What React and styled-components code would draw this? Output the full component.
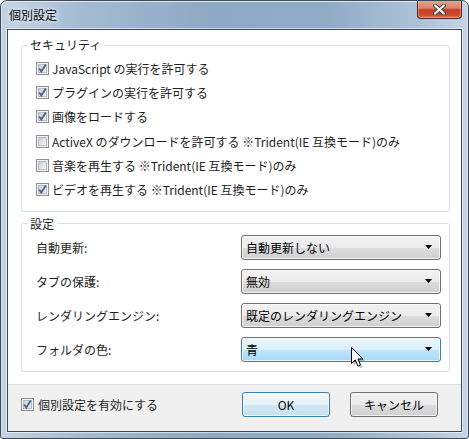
import React from 'react';
import styled, { createGlobalStyle } from 'styled-components';

const GlobalStyle = createGlobalStyle`
  html, body {
    margin: 0;
    padding: 0;
    background: #ffffff;
  }
  body {
    font-family: "Noto Sans CJK JP", "Noto Sans", sans-serif;
    font-size: 12px;
    color: #1e1e1e;
  }
`;

const securityItems = [
  { label: 'JavaScript の実行を許可する', checked: true },
  { label: 'プラグインの実行を許可する', checked: true },
  { label: '画像をロードする', checked: true },
  { label: 'ActiveX のダウンロードを許可する ※Trident(IE 互換モード)のみ', checked: false },
  { label: '音楽を再生する ※Trident(IE 互換モード)のみ', checked: false },
  { label: 'ビデオを再生する ※Trident(IE 互換モード)のみ', checked: true },
];

const settingItems = [
  { label: '自動更新:', value: '自動更新しない' },
  { label: 'タブの保護:', value: '無効' },
  { label: 'レンダリングエンジン:', value: '既定のレンダリングエンジン' },
  { label: 'フォルダの色:', value: '青', hover: true },
];

const CheckBox = ({ checked }) => (
  <Box>
    <svg width="13" height="13" viewBox="0 0 13 13">
      <defs>
        <linearGradient id="cbg" x1="0" y1="0" x2="1" y2="1">
          <stop offset="0" stopColor="#cbcfd5" />
          <stop offset="1" stopColor="#f6f6f6" />
        </linearGradient>
      </defs>
      <rect x="0.5" y="0.5" width="12" height="12" fill="#f4f4f4" stroke="#8e8f8f" />
      <rect x="2.5" y="2.5" width="8" height="8" fill="url(#cbg)" stroke="#b7bcc3" />
      {checked && (
        <path d="M3.2 6.6 L5.3 9.6 L9.8 2.6" fill="none" stroke="#4a5f97" strokeWidth="1.8" />
      )}
    </svg>
  </Box>
);

const Arrow = () => (
  <svg width="7" height="4" viewBox="0 0 7 4">
    <path d="M0 0 H7 L3.5 4 Z" fill="#000" />
  </svg>
);

const Cursor = () => (
  <Pointer width="14" height="22" viewBox="0 0 14 22">
    <path
      d="M2.5 2.5 V18.5 L6.3 14.9 L8.9 21.2 L11.4 20.1 L8.9 14 H13.9 Z"
      fill="rgba(0,0,0,0.25)"
    />
    <path
      d="M0.5 0.5 V16.5 L4.3 12.9 L6.9 19.2 L9.4 18.1 L6.9 12 H11.9 Z"
      fill="#fff"
      stroke="#000"
      strokeWidth="1"
      strokeLinejoin="round"
    />
  </Pointer>
);

const App = () => {
  return (
    <>
      <GlobalStyle />
      <Window>
        <TitleBar>
          <Title>個別設定</Title>
          <CloseButton>
            <svg width="13" height="11" viewBox="0 0 13 11">
              <path
                d="M2 1.5 L11 9.5 M11 1.5 L2 9.5"
                stroke="#3b3b3b"
                strokeWidth="4"
                strokeLinecap="round"
              />
              <path
                d="M2 1.5 L11 9.5 M11 1.5 L2 9.5"
                stroke="#ffffff"
                strokeWidth="2.2"
                strokeLinecap="round"
              />
            </svg>
          </CloseButton>
        </TitleBar>
        <Client>
          <Content>
            <Group>
              <Legend>セキュリティ</Legend>
              <CheckList>
                {securityItems.map((item) => (
                  <CheckRow key={item.label}>
                    <CheckBox checked={item.checked} />
                    <span>{item.label}</span>
                  </CheckRow>
                ))}
              </CheckList>
            </Group>
            <Group>
              <Legend>設定</Legend>
              <SettingList>
                {settingItems.map((item) => (
                  <SettingRow key={item.label}>
                    <SettingLabel>{item.label}</SettingLabel>
                    <Select $hover={item.hover}>
                      <span>{item.value}</span>
                      <Arrow />
                      {item.hover && <Cursor />}
                    </Select>
                  </SettingRow>
                ))}
              </SettingList>
            </Group>
          </Content>
          <Footer>
            <FooterCheck>
              <CheckBox checked />
              <span>個別設定を有効にする</span>
            </FooterCheck>
            <Button $primary>OK</Button>
            <Button>キャンセル</Button>
          </Footer>
        </Client>
      </Window>
    </>
  );
};

const Window = styled.div`
  box-sizing: border-box;
  width: 469px;
  height: 439px;
  display: flex;
  flex-direction: column;
  border: 1px solid #3d4a57;
  border-radius: 7px 7px 3px 3px;
  background: linear-gradient(
    90deg,
    #c2d3e4 0%,
    #a3bad2 18%,
    #8ea9c5 45%,
    #90abc7 70%,
    #aec3d9 90%,
    #c4d4e5 100%
  );
  box-shadow: inset 0 1px 0 #e2ebf4, inset 1px 0 0 #d9e4ef, inset -1px 0 0 #d9e4ef;
  overflow: hidden;
`;

const TitleBar = styled.div`
  height: 28px;
  display: flex;
  align-items: flex-start;
  justify-content: space-between;
  flex-shrink: 0;
`;

const Title = styled.div`
  padding: 6px 0 0 8px;
  font-size: 12px;
  line-height: 16px;
  color: #000;
  text-shadow: 0 0 8px rgba(255, 255, 255, 0.9), 0 0 3px rgba(255, 255, 255, 0.8);
`;

const CloseButton = styled.div`
  width: 45px;
  height: 19px;
  margin: -1px 6px 0 0;
  display: flex;
  align-items: center;
  justify-content: center;
  box-sizing: border-box;
  border: 1px solid #4c2320;
  border-top: none;
  border-radius: 0 0 4px 4px;
  background: linear-gradient(
    180deg,
    #e8a693 0%,
    #d8826c 45%,
    #c53d22 55%,
    #cf4c2e 85%,
    #e27c5c 100%
  );
  box-shadow: inset 0 0 0 1px rgba(255, 200, 180, 0.5);
`;

const Client = styled.div`
  flex: 1;
  margin: 0 6px 6px 6px;
  display: flex;
  flex-direction: column;
  border: 1px solid #3e4956;
  background: #ffffff;
  box-shadow: 0 0 0 1px rgba(255, 255, 255, 0.6);
`;

const Content = styled.div`
  flex: 1;
  display: flex;
  flex-direction: column;
  gap: 4px;
  padding: 7px 11px 0 13px;
`;

const Group = styled.fieldset`
  margin: 0;
  padding: 0 0 0 14px;
  border: 1px solid #d5dfe5;
  border-radius: 3px;
  min-width: 0;
`;

const Legend = styled.legend`
  margin-left: -8px;
  padding: 0 3px 0 2px;
  font-size: 12px;
  line-height: 16px;
  color: #1e1e1e;
`;

const CheckList = styled.div`
  display: flex;
  flex-direction: column;
  padding: 3px 0 9px;
`;

const CheckRow = styled.div`
  display: flex;
  align-items: center;
  gap: 3px;
  height: 24.3px;
  white-space: nowrap;
`;

const Box = styled.span`
  display: inline-flex;
  width: 13px;
  height: 13px;
  flex-shrink: 0;
`;

const SettingList = styled.div`
  display: flex;
  flex-direction: column;
  gap: 9px;
  padding: 3px 0 9px;
`;

const SettingRow = styled.div`
  display: flex;
  align-items: center;
  justify-content: space-between;
  padding-right: 8px;
`;

const SettingLabel = styled.span`
  white-space: nowrap;
`;

const Select = styled.div`
  position: relative;
  box-sizing: border-box;
  width: 200px;
  height: 25px;
  display: flex;
  align-items: center;
  justify-content: space-between;
  padding: 0 8px 0 4px;
  border: 1px solid ${(p) => (p.$hover ? '#3c7fb1' : '#707070')};
  border-radius: 3px;
  background: ${(p) =>
    p.$hover
      ? 'linear-gradient(180deg, #eaf6fd 0%, #d9f0fc 50%, #bee6fd 51%, #a7d9f5 100%)'
      : 'linear-gradient(180deg, #f2f2f2 0%, #ebebeb 50%, #dddddd 51%, #cfcfcf 100%)'};
  box-shadow: inset 0 0 0 1px rgba(255, 255, 255, 0.7);
  color: #000;
  white-space: nowrap;
`;

const Pointer = styled.svg`
  position: absolute;
  left: 109px;
  top: 9px;
`;

const Footer = styled.div`
  height: 47px;
  flex-shrink: 0;
  box-sizing: border-box;
  display: flex;
  align-items: flex-start;
  padding: 7px 0 0 13px;
  margin-top: 10px;
  border-top: 1px solid #dfdfdf;
  background: #f0f0f0;
`;

const FooterCheck = styled.div`
  display: flex;
  align-items: center;
  gap: 4px;
  height: 25px;
  width: 221px;
  white-space: nowrap;
`;

const Button = styled.div`
  box-sizing: border-box;
  width: 88px;
  height: 25px;
  margin-right: ${(p) => (p.$primary ? '20px' : '0')};
  display: flex;
  align-items: center;
  justify-content: center;
  border: 1px solid ${(p) => (p.$primary ? '#3c7fb1' : '#707070')};
  border-radius: 3px;
  background: ${(p) =>
    p.$primary
      ? 'linear-gradient(180deg, #f2f8fc 0%, #e6f1f9 50%, #d3e8f5 51%, #c6e0f1 100%)'
      : 'linear-gradient(180deg, #f2f2f2 0%, #ebebeb 50%, #dddddd 51%, #cfcfcf 100%)'};
  box-shadow: inset 0 0 0 1px rgba(255, 255, 255, 0.7);
  color: #000;
`;

export default App;
